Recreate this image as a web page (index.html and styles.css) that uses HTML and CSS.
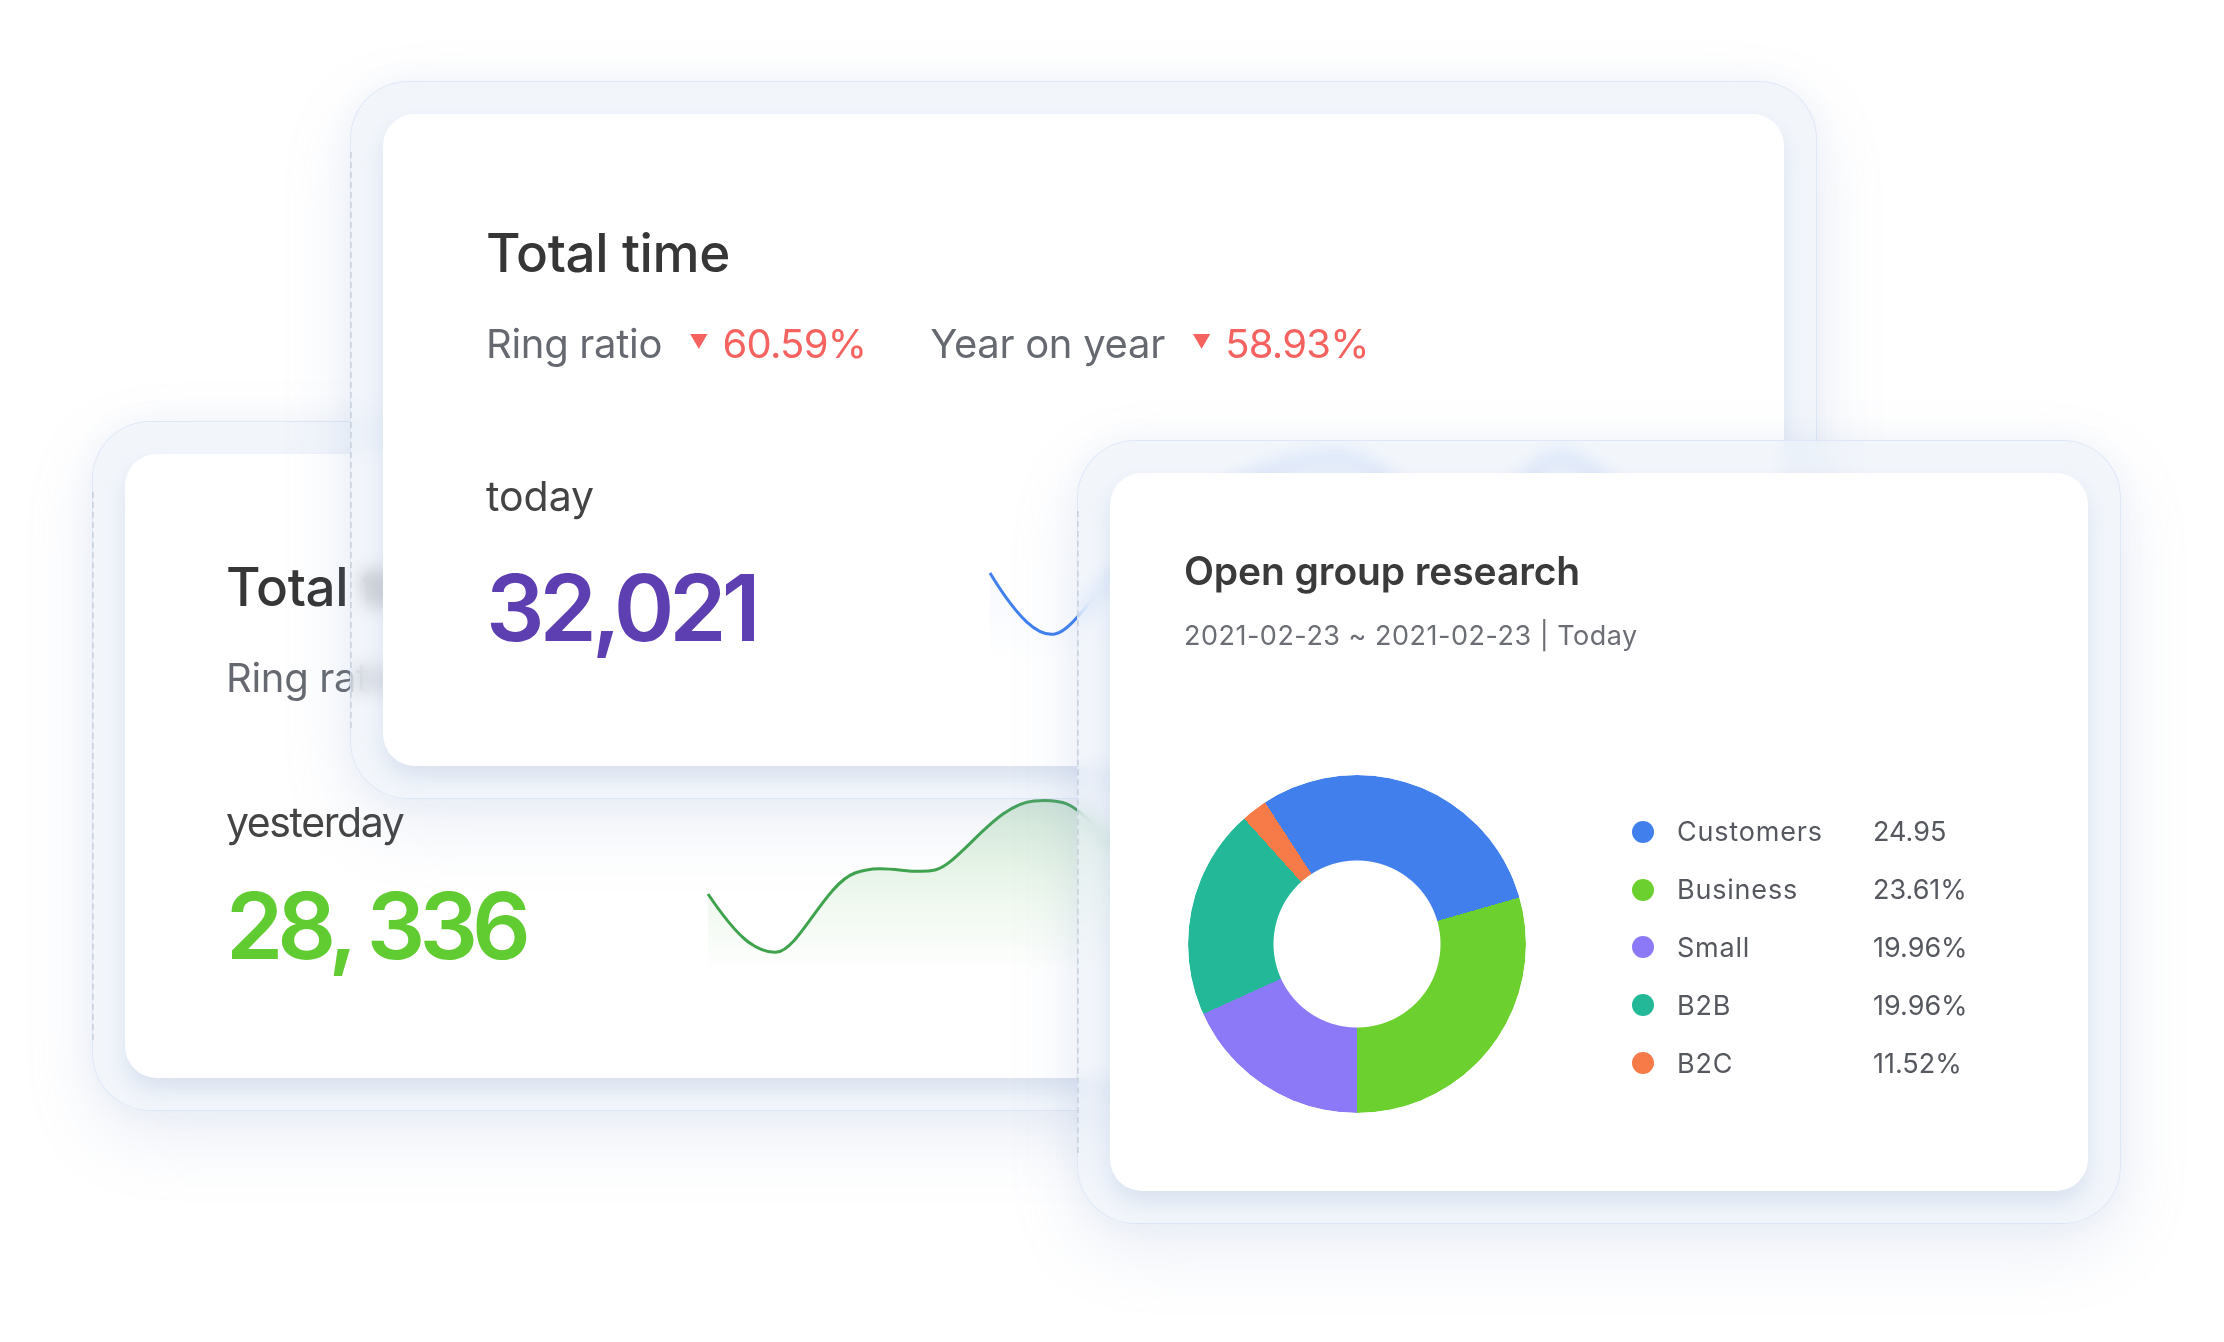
FILE: index.html
```
<!DOCTYPE html>
<html lang="en">
<head>
<meta charset="utf-8">
<title>Dashboard cards</title>
<link rel="stylesheet" href="styles.css">
</head>
<body>
<div class="stage">

  <section class="frame frame-back">
    <div class="card stat-card stat-card--back">
      <h2 class="stat-title">Total time</h2>
      <div class="ratio-row">
        <span class="ratio-label">Ring ratio</span>
        <span class="ratio-value"><span class="tri">▼</span>60.59%</span>
        <span class="ratio-label ratio-label--gap">Year on year</span>
        <span class="ratio-value"><span class="tri">▼</span>58.93%</span>
      </div>
      <div class="period">yesterday</div>
      <div class="big-number big-number--green">28, 336</div>
      <svg class="spark spark--green" viewBox="0 0 600 220" width="600" height="220">
        <defs>
          <linearGradient id="gfill" x1="0" y1="0" x2="0" y2="1">
            <stop offset="0" stop-color="#7cc67a" stop-opacity="0.28"/>
            <stop offset="1" stop-color="#7cc67a" stop-opacity="0"/>
          </linearGradient>
        </defs>
        <path d="M13 120 C 40 160, 60 180, 82 178 S 130 110, 160 99 S 215 102, 240 96 S 300 30, 339 27 S 380 35, 410 60 S 480 90, 560 60 L 560 200 L 13 200 Z" fill="url(#gfill)"/>
        <path d="M13 120 C 40 160, 60 180, 82 178 S 130 110, 160 99 S 215 102, 240 96 S 300 30, 339 27 S 380 35, 410 60 S 480 90, 560 60" fill="none" stroke="#3fa34d" stroke-width="3"/>
      </svg>
    </div>
  </section>

  <section class="frame frame-mid">
    <div class="card stat-card">
      <h2 class="stat-title">Total time</h2>
      <div class="ratio-row">
        <span class="ratio-label">Ring ratio</span>
        <span class="ratio-value"><span class="tri">▼</span>60.59%</span>
        <span class="ratio-label ratio-label--gap">Year on year</span>
        <span class="ratio-value"><span class="tri">▼</span>58.93%</span>
      </div>
      <div class="period">today</div>
      <div class="big-number big-number--purple">32,021</div>
      <svg class="spark spark--blue" viewBox="0 0 750 240" width="750" height="240">
        <defs>
          <linearGradient id="bfill" x1="0" y1="0" x2="0" y2="1">
            <stop offset="0" stop-color="#8fb0f5" stop-opacity="0.18"/>
            <stop offset="1" stop-color="#8fb0f5" stop-opacity="0"/>
          </linearGradient>
        </defs>
        <path d="M7 139 C 35 185, 55 203, 72 200 S 110 160, 150 120 S 280 22, 351 22 S 430 107, 468 107 S 540 22, 578 22 S 680 110, 718 127 L 718 230 L 7 230 Z" fill="url(#bfill)"/>
        <path d="M7 139 C 35 185, 55 203, 72 200 S 110 160, 150 120 S 280 22, 351 22 S 430 107, 468 107 S 540 22, 578 22 S 680 110, 718 127" fill="none" stroke="#3f7ff0" stroke-width="3"/>
      </svg>
    </div>
  </section>

  <section class="frame frame-front">
    <div class="card pie-card">
      <h2 class="pie-title">Open group research</h2>
      <div class="pie-date">2021-02-23 ~ 2021-02-23 | Today</div>
      <div class="pie-body">
        <div class="donut"></div>
        <ul class="legend">
          <li class="legend-row"><span class="dot dot--blue"></span><span class="legend-name">Customers</span><span class="legend-val">24.95</span></li>
          <li class="legend-row"><span class="dot dot--green"></span><span class="legend-name">Business</span><span class="legend-val">23.61%</span></li>
          <li class="legend-row"><span class="dot dot--purple"></span><span class="legend-name">Small</span><span class="legend-val">19.96%</span></li>
          <li class="legend-row"><span class="dot dot--teal"></span><span class="legend-name">B2B</span><span class="legend-val">19.96%</span></li>
          <li class="legend-row"><span class="dot dot--orange"></span><span class="legend-name">B2C</span><span class="legend-val">11.52%</span></li>
        </ul>
      </div>
    </div>
  </section>

</div>
</body>
</html>
```
FILE: styles.css
```
* { box-sizing: border-box; }

html, body {
  margin: 0;
  padding: 0;
  background: #ffffff;
}

body {
  font-family: "Inter", "DejaVu Sans", sans-serif;
  color: #3b3b3b;
}

.stage {
  position: relative;
  width: 2224px;
  height: 1342px;
  overflow: hidden;
  background: #ffffff;
}

/* glass frames (windows on a free canvas) */
.frame {
  position: absolute;
  padding: 32px;
  border-radius: 58px;
  background: rgba(232, 238, 248, 0.55);
  border: 1.5px solid rgba(218, 229, 247, 0.85);
  box-shadow: 0 26px 70px rgba(125, 150, 200, 0.16), 0 0 30px rgba(160, 180, 220, 0.10);
  backdrop-filter: blur(9px);
  -webkit-backdrop-filter: blur(9px);
}

.frame::before {
  content: "";
  position: absolute;
  left: -1px;
  top: 70px;
  bottom: 70px;
  border-left: 2px dashed rgba(190, 196, 208, 0.55);
}

.frame-back {
  left: 92px;
  top: 421px;
  width: 1220px;
  height: 690px;
  z-index: 1;
}

.frame-mid {
  left: 350px;
  top: 81px;
  width: 1467px;
  height: 718px;
  z-index: 2;
}

.frame-front {
  left: 1077px;
  top: 440px;
  width: 1044px;
  height: 784px;
  z-index: 3;
}

.card {
  position: relative;
  width: 100%;
  height: 100%;
  background: #ffffff;
  border-radius: 32px;
  box-shadow: 0 12px 22px rgba(160, 178, 212, 0.30);
  overflow: hidden;
}

/* stat cards */
.stat-card {
  padding: 108px 0 0 103px;
}

.stat-card--back {
  padding-top: 102px;
  padding-left: 101px;
}

.stat-title {
  margin: 0;
  font-size: 53px;
  line-height: 62px;
  font-weight: 500;
  color: #363636;
  letter-spacing: -0.4px;
}

.ratio-row {
  display: flex;
  align-items: center;
  margin-top: 36px;
  height: 48px;
  font-size: 40px;
  line-height: 48px;
}

.ratio-label {
  color: #666a70;
  letter-spacing: -0.3px;
}

.ratio-label--gap {
  margin-left: 64px;
}

.ratio-value {
  display: inline-flex;
  align-items: center;
  margin-left: 27px;
  color: #f5625f;
  letter-spacing: -0.8px;
}

.tri {
  font-size: 19px;
  margin-right: 15px;
  position: relative;
  top: -2px;
}

.period {
  margin-top: 104px;
  font-size: 41px;
  line-height: 48px;
  color: #444;
  letter-spacing: 0;
}

.stat-card--back .period {
  margin-top: 96px;
  letter-spacing: -1.4px;
}

.big-number {
  margin-top: 38px;
  font-size: 92px;
  line-height: 100px;
  font-weight: 600;
  letter-spacing: -5px;
}

.stat-card--back .big-number {
  margin-top: 30px;
  letter-spacing: -6px;
}

.big-number--purple { color: #5e3fb1; }
.big-number--green { color: #61cc31; }

.spark {
  position: absolute;
  display: block;
}

.spark--blue {
  left: 600px;
  top: 320px;
}

.spark--green {
  left: 570px;
  top: 320px;
}

/* pie card */
.pie-card {
  padding: 75px 0 0 74px;
}

.pie-title {
  margin: 0;
  font-size: 39px;
  line-height: 46px;
  font-weight: 600;
  color: #3a3a3a;
  letter-spacing: -0.1px;
}

.pie-date {
  margin-top: 25px;
  font-size: 27px;
  line-height: 34px;
  color: #6b6e74;
  letter-spacing: 0.5px;
}

.pie-body {
  display: flex;
  align-items: center;
  margin-top: 122px;
  margin-left: 4px;
}

.donut {
  flex: none;
  width: 338px;
  height: 338px;
  border-radius: 50%;
  background: conic-gradient(from 327deg,
    #4180ec 0deg 107deg,
    #6cd02f 107deg 213deg,
    #8b79f8 213deg 278.5deg,
    #22b898 278.5deg 351deg,
    #f77a49 351deg 360deg);
  -webkit-mask: radial-gradient(circle, transparent 83px, #000 84px);
  mask: radial-gradient(circle, transparent 83px, #000 84px);
}

.legend {
  list-style: none;
  margin: 7px 0 0 106px;
  padding: 0;
}

.legend-row {
  display: flex;
  align-items: center;
  height: 57.8px;
  font-size: 27px;
  color: #55585e;
  letter-spacing: 0.8px;
}

.dot {
  flex: none;
  width: 22px;
  height: 22px;
  border-radius: 50%;
  margin-right: 23px;
}

.dot--blue { background: #4180ec; }
.dot--green { background: #6cd02f; }
.dot--purple { background: #8b79f8; }
.dot--teal { background: #22b898; }
.dot--orange { background: #f77a49; }

.legend-name {
  width: 196px;
  white-space: nowrap;
}

.legend-val {
  white-space: nowrap;
  letter-spacing: 0;
}
```
